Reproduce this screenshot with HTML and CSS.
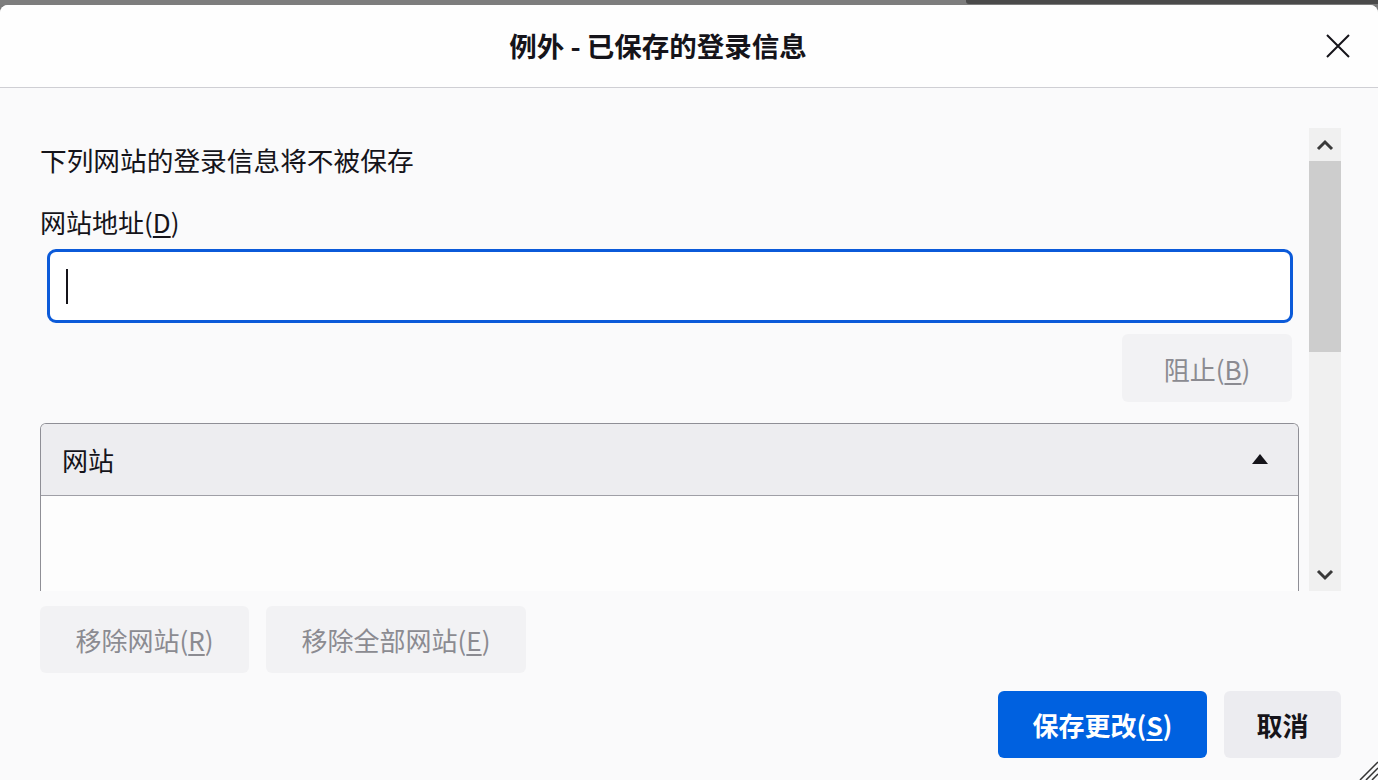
FILE: index.html
```html
<!DOCTYPE html>
<html lang="zh-CN">
<head>
<meta charset="utf-8">
<title>例外 - 已保存的登录信息</title>
<link rel="stylesheet" href="styles.css">
</head>
<body>
<div class="topstrip"><div class="strip-dark"></div></div>
<div class="dialog">
  <header class="dlg-header">
    <h1 class="dlg-title">例外 - 已保存的登录信息</h1>
    <div class="close-area">
      <button class="close-btn" aria-label="关闭">
        <svg width="26" height="26" viewBox="0 0 26 26"><path d="M2 2 L24 24 M24 2 L2 24" stroke="#15141a" stroke-width="2" fill="none"/></svg>
      </button>
    </div>
  </header>
  <main class="dlg-body">
    <div class="scroll-area">
      <div class="scroll-content">
        <p class="desc">下列网站的登录信息将不被保存</p>
        <label class="field-label">网站地址(<u>D</u>)</label>
        <div class="text-input"><span class="caret"></span></div>
        <div class="block-row">
          <button class="btn btn-disabled btn-block">阻止(<u>B</u>)</button>
        </div>
        <div class="site-table">
          <div class="table-head">
            <span class="col-title">网站</span>
            <svg class="sort-icon" width="16" height="10" viewBox="0 0 16 10"><path d="M8 0 L16 10 L0 10 Z" fill="#15141a"/></svg>
          </div>
          <div class="table-body"></div>
        </div>
      </div>
      <div class="scrollbar">
        <div class="sb-btn">
          <svg width="18" height="12" viewBox="0 0 18 12"><path d="M2 10 L9 3 L16 10" stroke="#3a3a3a" stroke-width="3" fill="none"/></svg>
        </div>
        <div class="sb-thumb"></div>
        <div class="sb-track"></div>
        <div class="sb-btn">
          <svg width="18" height="12" viewBox="0 0 18 12"><path d="M2 2 L9 9 L16 2" stroke="#3a3a3a" stroke-width="3" fill="none"/></svg>
        </div>
      </div>
    </div>
    <div class="remove-row">
      <button class="btn btn-disabled btn-remove">移除网站(<u>R</u>)</button>
      <button class="btn btn-disabled btn-remove-all">移除全部网站(<u>E</u>)</button>
    </div>
    <div class="footer-row">
      <button class="btn btn-primary btn-save">保存更改(<u>S</u>)</button>
      <button class="btn btn-secondary btn-cancel">取消</button>
    </div>
  </main>
  <svg class="grip" width="22" height="22" viewBox="0 0 22 22"><path d="M22 4 L4 22 M22 10 L10 22 M22 16 L16 22" stroke="#333" stroke-width="1.5" fill="none"/></svg>
</div>
</body>
</html>
```
FILE: styles.css
```css
* { box-sizing: border-box; }
html, body { margin: 0; padding: 0; }
body {
  width: 1378px;
  height: 780px;
  overflow: hidden;
  background: #7a7a7a;
  font-family: "Noto Sans CJK SC", "Noto Sans", sans-serif;
  color: #15141a;
}
.topstrip {
  height: 5px;
  background: #7d7d7d;
  display: flex;
  justify-content: flex-end;
}
.strip-dark {
  width: 412px;
  height: 4px;
  background: #4a4a4a;
  border-radius: 0 0 0 3px;
}
.dialog {
  position: relative;
  height: 775px;
  background: #fafafb;
  border-radius: 8px 8px 0 0;
  display: flex;
  flex-direction: column;
  overflow: hidden;
}
.dlg-header {
  height: 83px;
  flex: none;
  background: #fefefe;
  border-bottom: 1px solid #cfcfd4;
  display: flex;
  align-items: center;
}
.dlg-title {
  flex: 1;
  margin: 0;
  text-align: center;
  font-size: 27.5px;
  font-weight: 700;
  line-height: 1;
}
.close-area {
  width: 62px;
  flex: none;
  display: flex;
  padding-left: 9px;
}
.close-btn {
  width: 26px;
  height: 26px;
  padding: 0;
  border: none;
  background: transparent;
  display: flex;
}
.dlg-body {
  flex: 1;
  display: flex;
  flex-direction: column;
  padding: 40px 37px 0 0;
}
.scroll-area {
  height: 463px;
  display: flex;
  gap: 10px;
  flex: none;
}
.scroll-content {
  flex: 1;
  padding-left: 40px;
  overflow: hidden;
  display: flex;
  flex-direction: column;
}
.desc {
  margin: 14px 0 0 0;
  font-size: 26.7px;
  line-height: 36px;
}
.field-label {
  display: block;
  margin-top: 26px;
  font-size: 26px;
  line-height: 36px;
}
u { text-decoration-thickness: 1.5px; text-underline-offset: 3px; }
.text-input {
  margin: 9px 6px 0 7px;
  height: 74px;
  flex: none;
  border: 3.5px solid #0b5ad9;
  border-radius: 9px;
  background: #ffffff;
  display: flex;
  align-items: center;
  padding-left: 16px;
}
.caret {
  width: 2px;
  height: 35px;
  background: #15141a;
}
.block-row {
  display: flex;
  justify-content: flex-end;
  margin: 11px 7px 0 0;
}
.btn {
  border: none;
  border-radius: 6px;
  font-family: "Noto Sans CJK SC", "Noto Sans", sans-serif;
  font-size: 26px;
  height: 67px;
  padding: 0;
  display: flex;
  align-items: center;
  justify-content: center;
}
.btn-disabled {
  background: #f2f2f4;
  color: #8b8b91;
}
.btn-block { width: 170px; height: 68px; }
.site-table {
  margin-top: 21px;
  border: 1px solid #8f8f96;
  border-bottom: none;
  border-radius: 6px 6px 0 0;
  overflow: hidden;
  flex: none;
  height: 200px;
}
.table-head {
  height: 72px;
  background: #ededf0;
  border-bottom: 1px solid #9f9fa6;
  display: flex;
  align-items: center;
  justify-content: space-between;
  padding: 0 30px 0 21px;
}
.col-title { font-size: 26px; }
.sort-icon { margin-top: -2px; }
.table-body {
  height: 128px;
  background: #fdfdfd;
}
.scrollbar {
  width: 32px;
  flex: none;
  background: #f0f0f0;
  display: flex;
  flex-direction: column;
}
.sb-btn {
  height: 33px;
  display: flex;
  align-items: center;
  justify-content: center;
  flex: none;
}
.sb-thumb {
  height: 191px;
  background: #cdcdcd;
  flex: none;
}
.sb-track { flex: 1; }
.remove-row {
  display: flex;
  gap: 17px;
  padding-left: 40px;
  margin-top: 15px;
}
.btn-remove { width: 209px; }
.btn-remove-all { width: 260px; }
.footer-row {
  display: flex;
  justify-content: flex-end;
  gap: 17px;
  margin-top: 18px;
}
.btn-primary {
  background: #0061e0;
  color: #ffffff;
  font-weight: 700;
}
.btn-secondary {
  background: #ececf0;
  color: #15141a;
  font-weight: 700;
}
.btn-save { width: 209px; }
.btn-cancel { width: 117px; }
.grip {
  position: absolute;
  right: 0;
  bottom: 0;
}
```
